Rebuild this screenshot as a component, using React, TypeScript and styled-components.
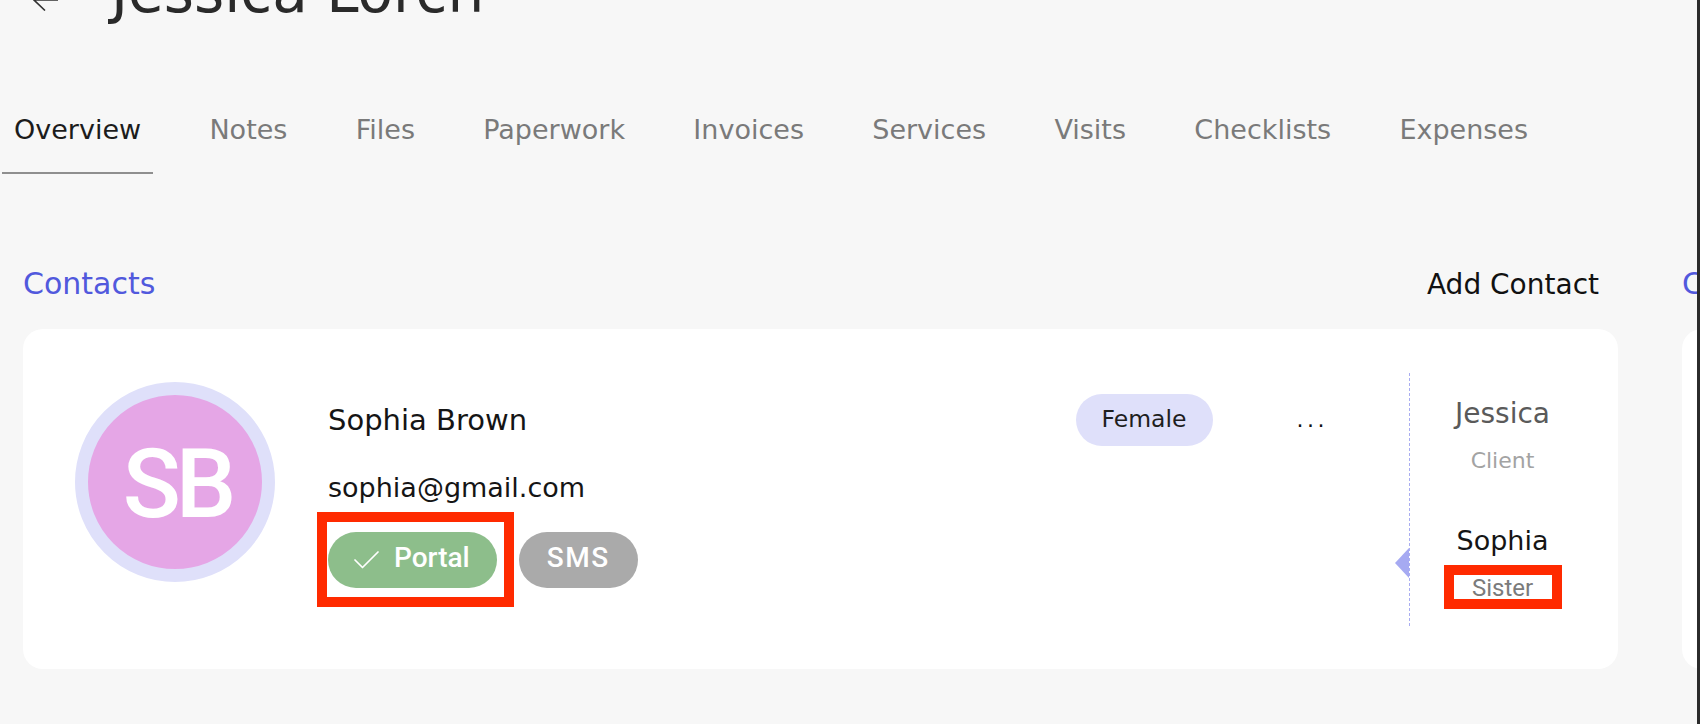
import React from "react";
import styled, { createGlobalStyle } from "styled-components";

const colors = {
  page: "#f7f7f7",
  ink: "#151515",
  muted: "#7a7a7a",
  indigo: "#5159dd",
  lavender: "#dfe0fa",
  pink: "#e5a6e6",
  green: "#8dbe8b",
  gray: "#aaaaaa",
  dash: "#a9adf2",
  marker: "#a6aaf2",
  annotate: "#ff2a00",
};

const GlobalStyle = createGlobalStyle`
  html, body {
    margin: 0;
    padding: 0;
    background: ${colors.page};
  }
  body {
    font-family: "DejaVu Sans", "Liberation Sans", sans-serif;
    overflow: hidden;
  }
  * {
    box-sizing: border-box;
  }
`;

const Page = styled.div`
  width: 1700px;
  height: 724px;
  overflow: hidden;
  background: ${colors.page};
  border-right: 3px solid #2b2b2b;
`;

const Header = styled.header`
  display: flex;
  align-items: flex-start;
  gap: 53px;
  height: 58px;
  margin-top: -37px;
  padding-left: 33px;
`;

const Back = styled.svg`
  margin-top: 26px;
  flex: 0 0 auto;
`;

const Title = styled.h1`
  margin: 0;
  font-size: 58px;
  line-height: 1;
  font-weight: 400;
  color: #2a2a2a;
`;

const Tabs = styled.nav`
  display: flex;
  gap: 44.3px;
  margin-top: 95px;
  padding-left: 2px;
`;

const Tab = styled.div<{ $active?: boolean }>`
  font-size: 27px;
  line-height: 1;
  padding: 0 12px 29px;
  color: ${(p) => (p.$active ? "#1c1c1c" : colors.muted)};
  border-bottom: 2px solid ${(p) => (p.$active ? "#8f8f8f" : "transparent")};
`;

const Board = styled.div`
  display: flex;
  gap: 64px;
  margin-top: 95px;
  padding-left: 23px;
`;

const Section = styled.section`
  flex: 0 0 1595px;
  display: flex;
  flex-direction: column;
`;

const SectionHead = styled.div`
  display: flex;
  align-items: baseline;
  justify-content: space-between;
  padding-right: 19px;
  margin-bottom: 30px;
`;

const SectionTitle = styled.h2`
  margin: 0;
  font-size: 30px;
  line-height: 1;
  font-weight: 400;
  color: ${colors.indigo};
`;

const AddLink = styled.button`
  border: none;
  background: none;
  padding: 0;
  font-family: inherit;
  font-size: 28px;
  line-height: 1;
  color: #111;
`;

const Card = styled.div`
  height: 340px;
  display: flex;
  background: #fff;
  border-radius: 20px;
  padding: 0 23px 0 52px;
`;

const Avatar = styled.div`
  flex: 0 0 200px;
  height: 200px;
  margin-top: 53px;
  border-radius: 50%;
  border: 13px solid ${colors.lavender};
  background: ${colors.pink};
  display: flex;
  align-items: center;
  justify-content: center;
  padding: 4px 0 0 4px;
  color: #fff;
  font-family: Roboto, "DejaVu Sans", sans-serif;
  font-weight: 500;
  font-size: 96px;
  line-height: 1;
  letter-spacing: -5px;
`;

const Info = styled.div`
  flex: 1;
  display: flex;
  flex-direction: column;
  margin-left: 53px;
  padding-top: 65px;
`;

const HeadRow = styled.div`
  display: flex;
  align-items: center;
  height: 52px;
`;

const Name = styled.div`
  flex: 1;
  font-size: 29px;
  line-height: 1;
  color: ${colors.ink};
`;

const GenderPill = styled.span`
  height: 52px;
  display: inline-flex;
  align-items: center;
  padding: 0 26px;
  border-radius: 26px;
  background: ${colors.lavender};
  font-size: 23.5px;
  line-height: 1;
  color: #1e1e1e;
`;

const More = styled.span`
  margin-left: 84px;
  font-size: 22px;
  line-height: 1;
  letter-spacing: 3.5px;
  color: #111;
`;

const Email = styled.div`
  margin-top: 28px;
  font-size: 27px;
  line-height: 1;
  color: ${colors.ink};
`;

const Badges = styled.div`
  display: flex;
  align-items: center;
  gap: 22px;
  margin-top: 31px;
`;

const Pill = styled.span<{ $tone: "green" | "gray" }>`
  height: 56px;
  display: inline-flex;
  align-items: center;
  gap: 15px;
  padding: 0 ${(p) => (p.$tone === "gray" ? "28px" : "27px")} 5px
    ${(p) => (p.$tone === "gray" ? "28px" : "26px")};
  border-radius: 28px;
  background: ${(p) => (p.$tone === "green" ? colors.green : colors.gray)};
  color: #fff;
  font-family: Roboto, "DejaVu Sans", sans-serif;
  font-weight: 500;
  font-size: 28px;
  line-height: 1;
  letter-spacing: ${(p) => (p.$tone === "gray" ? "1.5px" : "0")};

  svg {
    margin-top: 5px;
  }
`;

const Annotated = styled.span<{ $inset: string }>`
  position: relative;
  display: inline-flex;

  &::after {
    content: "";
    position: absolute;
    inset: ${(p) => p.$inset};
    border: 10px solid ${colors.annotate};
    pointer-events: none;
  }
`;

const Divider = styled.div`
  flex: 0 0 1px;
  position: relative;
  margin: 44px 0 43px 81px;
  border-left: 1px dashed ${colors.dash};

  &::before {
    content: "";
    position: absolute;
    top: 175px;
    left: -15px;
    width: 0;
    height: 0;
    border-top: 15px solid transparent;
    border-bottom: 15px solid transparent;
    border-right: 14px solid ${colors.marker};
  }
`;

const Relations = styled.div`
  flex: 0 0 185px;
  display: flex;
  flex-direction: column;
  align-items: center;
  padding-top: 71px;
`;

const PersonName = styled.div<{ $self?: boolean; $gap: number }>`
  margin-top: ${(p) => p.$gap}px;
  font-size: ${(p) => (p.$self ? 28 : 27)}px;
  line-height: 1;
  color: ${(p) => (p.$self ? "#5a5a5a" : colors.ink)};
`;

const Role = styled.div<{ $gap: number; $strong?: boolean }>`
  margin-top: ${(p) => p.$gap}px;
  font-family: ${(p) =>
    p.$strong ? 'Roboto, "DejaVu Sans", sans-serif' : '"DejaVu Sans", sans-serif'};
  font-size: ${(p) => (p.$strong ? 24 : 22)}px;
  line-height: 1;
  color: ${(p) => (p.$strong ? "#7b7b7b" : "#a3a3a3")};
`;

const tabs = [
  "Overview",
  "Notes",
  "Files",
  "Paperwork",
  "Invoices",
  "Services",
  "Visits",
  "Checklists",
  "Expenses",
];

const ContactCard = () => (
  <Card>
    <Avatar>SB</Avatar>
    <Info>
      <HeadRow>
        <Name>Sophia Brown</Name>
        <GenderPill>Female</GenderPill>
        <More>...</More>
      </HeadRow>
      <Email>sophia@gmail.com</Email>
      <Badges>
        <Annotated $inset="-20px -17px -19px -11px">
          <Pill $tone="green">
            <svg width="25" height="18" viewBox="0 0 25 18" fill="none">
              <polyline
                points="1,9 8.5,16.5 24,1"
                stroke="#fff"
                strokeWidth="1.7"
                strokeLinecap="round"
                strokeLinejoin="round"
              />
            </svg>
            Portal
          </Pill>
        </Annotated>
        <Pill $tone="gray">SMS</Pill>
      </Badges>
    </Info>
    <Divider />
    <Relations>
      <PersonName $self $gap={0}>
        Jessica
      </PersonName>
      <Role $gap={22}>Client</Role>
      <PersonName $gap={55}>Sophia</PersonName>
      <Annotated $inset="-11px -29px -9px -28px" style={{ marginTop: 22 }}>
        <Role $gap={0} $strong>
          Sister
        </Role>
      </Annotated>
    </Relations>
  </Card>
);

export default function App() {
  return (
    <Page>
      <GlobalStyle />
      <Header>
        <Back width="25" height="22" viewBox="0 0 25 22" fill="none">
          <path
            d="M1 11H25M12 0.5L1 11L12 21.5"
            stroke="#333"
            strokeWidth="1.6"
          />
        </Back>
        <Title>Jessica Lorch</Title>
      </Header>
      <Tabs>
        {tabs.map((t, i) => (
          <Tab key={t} $active={i === 0}>
            {t}
          </Tab>
        ))}
      </Tabs>
      <Board>
        <Section>
          <SectionHead>
            <SectionTitle>Contacts</SectionTitle>
            <AddLink>Add Contact</AddLink>
          </SectionHead>
          <ContactCard />
        </Section>
        <Section>
          <SectionHead>
            <SectionTitle>Care Team</SectionTitle>
          </SectionHead>
          <Card />
        </Section>
      </Board>
    </Page>
  );
}
